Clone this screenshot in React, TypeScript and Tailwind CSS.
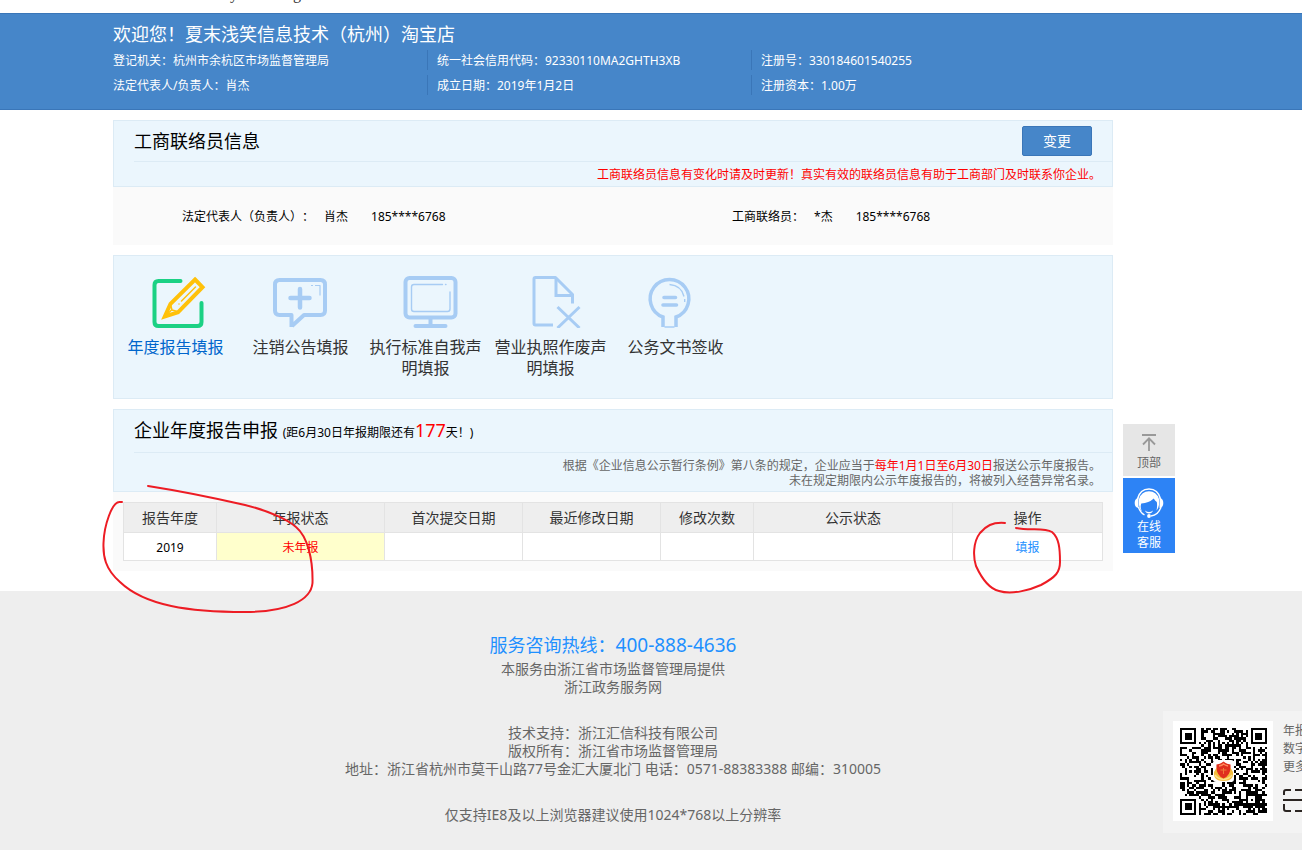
import React from "react";
import { clsx } from "clsx";

const profile = [
  ["登记机关：杭州市余杭区市场监督管理局", "统一社会信用代码：92330110MA2GHTH3XB", "注册号：330184601540255"],
  ["法定代表人/负责人：肖杰", "成立日期：2019年1月2日", "注册资本：1.00万"],
];

const columns = [
  { name: "报告年度", width: "w-[93px]" },
  { name: "年报状态", width: "w-[168px]" },
  { name: "首次提交日期", width: "w-[138px]" },
  { name: "最近修改日期", width: "w-[138px]" },
  { name: "修改次数", width: "w-[93px]" },
  { name: "公示状态", width: "w-[199px]" },
  { name: "操作", width: "" },
];

const ReportIcon = () => (
  <svg viewBox="0 0 112 52" className="h-[52px] w-full" fill="none" strokeLinecap="round" strokeLinejoin="round">
    <path d="M61 5H39q-4 0-4 4v37q0 4 4 4h39q4 0 4-4V27" stroke="#1bd184" strokeWidth="4" />
    <path d="M75.500 3.500 83 11.200 58.500 36.300 45.300 40.500 51 27.800Z" stroke="#ffc10a" strokeWidth="4" strokeLinejoin="miter" />
    <path d="M51 28.500l1.500 5.500 5.500 1.500M46 40l6-6" stroke="#ffc10a" strokeWidth="1.500" />
    <path d="M62 25 76 11M59.500 28v.1" stroke="#ffc10a" strokeWidth="1.500" />
  </svg>
);

const CancelIcon = () => (
  <svg viewBox="0 0 112 52" className="h-[52px] w-full" fill="none" stroke="#a7ccf4" strokeLinejoin="round">
    <path d="M47 51V39H35q-4.500 0-4.500-4.500V8.500Q30.500 4 35 4h41q4.500 0 4.500 4.500v26Q80.500 39 76 39H59.500L47.500 50" strokeWidth="4" />
    <path d="M55.500 13v18.500M46 22h19" strokeWidth="4.500" strokeLinecap="round" />
    <path d="M70.500 9.500h5v10M66.500 9.500h2" strokeWidth="1.200" />
  </svg>
);

const StandardIcon = () => (
  <svg viewBox="0 0 112 52" className="h-[52px] w-full" fill="none" stroke="#a7ccf4" strokeLinecap="round">
    <rect x="36" y="2" width="50" height="39.500" rx="4" strokeWidth="4" />
    <path d="M80.500 16v17q0 2.500-2.500 2.500H44.500Q42 35.500 42 33V11q0-2.500 2.500-2.500H73M76 8.500h.5" strokeWidth="1.400" />
    <path d="M61 42v6M46 50h30" strokeWidth="4" />
  </svg>
);

const LicenseIcon = () => (
  <svg viewBox="0 0 112 52" className="h-[52px] w-full" fill="none" stroke="#a7ccf4" strokeWidth="3">
    <path d="M78 27.500V18.500L61 1.500H41q-1.500 0-1.500 1.500v44.500q0 1.500 1.500 1.500h17.500" strokeLinejoin="round" />
    <path d="M61.500 2v17.500H78" />
    <path d="M63 31 85 52M85 31 63 52" />
  </svg>
);

const DocumentIcon = () => (
  <svg viewBox="0 0 112 52" className="h-[52px] w-full" fill="none" stroke="#a7ccf4">
    <path d="M43.500 51V41A19.300 19.300 0 1 1 56.500 41V51" strokeWidth="3.500" />
    <path d="M45 51h10" strokeWidth="1.500" />
    <path d="M44.500 21.500h11.500M43.500 29h13.500" strokeWidth="3.600" strokeLinecap="round" />
    <path d="M50 8.500q12 1 14.500 12M65.200 23v3" strokeWidth="1.400" />
  </svg>
);

const services = [
  { name: "年度报告填报", icon: <ReportIcon />, active: true },
  { name: "注销公告填报", icon: <CancelIcon /> },
  { name: "执行标准自我声明填报", icon: <StandardIcon /> },
  { name: "营业执照作废声明填报", icon: <LicenseIcon /> },
  { name: "公务文书签收", icon: <DocumentIcon /> },
];

const QR_SIZE = 37;

const inBox = (x: number, y: number, left: number, top: number, size: number) =>
  x >= left && y >= top && x < left + size && y < top + size;

// square rings of the finder and alignment marks
const ring = (x: number, y: number, cx: number, cy: number) => Math.max(Math.abs(x - cx), Math.abs(y - cy));

const qrPath = () => {
  let seed = 20190102;
  let d = "";
  for (let y = 0; y < QR_SIZE; y++) {
    for (let x = 0; x < QR_SIZE; x++) {
      seed = (Math.imul(seed, 1103515245) + 12345) & 0x7fffffff;
      let dark = ((seed >> 16) & 255) < 132;
      if (inBox(x, y, 0, 0, 8)) dark = [0, 1, 3].includes(ring(x, y, 3, 3));
      else if (inBox(x, y, 29, 0, 8)) dark = [0, 1, 3].includes(ring(x, y, 33, 3));
      else if (inBox(x, y, 0, 29, 8)) dark = [0, 1, 3].includes(ring(x, y, 3, 33));
      else if (inBox(x, y, 28, 28, 5)) dark = ring(x, y, 30, 30) !== 1;
      else if (x === 6) dark = y % 2 === 0;
      else if (y === 6) dark = x % 2 === 0;
      if (dark) d += `M${x} ${y}h1v1h-1z`;
    }
  }
  return d;
};

const QrCode = () => (
  <svg viewBox="0 0 100 100" className="size-[100px] shrink-0 bg-white">
    <path d={qrPath()} transform="translate(7 7) scale(2.351)" fill="#000" shapeRendering="crispEdges" />
    <rect x="40" y="39" width="21" height="22" rx="3" fill="#fff" />
    <path d="M41 51q-1 9 9.500 9T60 51l-3-5H44Z" fill="#f5bd3c" />
    <path d="M42 54q3 4 8.500 4.500Q56 58 59 54" stroke="#fbe08a" strokeWidth="1.500" fill="none" />
    <path d="M43.500 43.500q4-.5 7-3 3 2.500 7 3 .8 10.500-7 14-7.800-3.500-7-14Z" fill="#e0301e" />
    <path d="M46 45q3-.5 4.500-2 2 1.500 4.500 2" stroke="#ff8a5c" strokeWidth="1.500" fill="none" />
    <path d="M47.500 49h6M50.500 47v6" stroke="#f07a3a" strokeWidth="1" />
  </svg>
);

// tail end of the site banner, scrolled almost out of view
const Banner = () => (
  <div className="h-[13px] overflow-hidden pr-19">
    <div className="mx-auto -mt-3.5 flex max-w-[1000px] gap-[55px] pl-[117px] font-['Liberation_Serif',serif] text-base leading-4 text-[#333]">
      <span>y</span>
      <span>g</span>
    </div>
  </div>
);

const Header = () => (
  <header className="border-y border-[#3a76b8] bg-[#4686c9] pr-19 text-white">
    <div className="mx-auto max-w-[1000px] pt-2 pb-3.5">
      <h1 className="mb-1 text-lg leading-6">欢迎您！夏末浅笑信息技术（杭州）淘宝店</h1>
      <div className="flex flex-col gap-[5px] text-xs leading-[22px]">
        {profile.map((row) => (
          <div key={row[0]} className="grid h-5 grid-cols-[314px_324px_1fr]">
            {row.map((item, i) => (
              <span key={item} className={clsx("h-5", i > 0 && "border-l border-[#3a76b8] pl-[9px]")}>
                {item}
              </span>
            ))}
          </div>
        ))}
      </div>
    </div>
  </header>
);

const Contact = () => (
  <section>
    <div className="border border-[#dcebf5] bg-[#ebf6fd] pl-5">
      <div className="flex h-[41px] items-center justify-between border-b border-[#dcebf5] pr-5">
        <h2 className="text-lg">工商联络员信息</h2>
        <button className="h-[30px] w-[70px] rounded-xs border border-[#3a76b8] bg-[#4686c9] text-sm text-white">变更</button>
      </div>
      <p className="h-6 pr-[11px] text-right text-xs leading-[26px] text-[#f00]">
        工商联络员信息有变化时请及时更新！真实有效的联络员信息有助于工商部门及时联系你企业。
      </p>
    </div>
    <div className="grid h-[58px] grid-cols-[550px_1fr] items-center bg-[#fafafa] pt-0.5 pl-[69px] text-xs">
      <div className="flex">
        <span className="mr-2.5 [text-spacing-trim:space-all]">法定代表人（负责人）：</span>
        <span className="mr-[23px]">肖杰</span>
        <span>185****6768</span>
      </div>
      <div className="flex">
        <span className="mr-2.5">工商联络员：</span>
        <span className="mr-[23px]">*杰</span>
        <span>185****6768</span>
      </div>
    </div>
  </section>
);

const Services = () => (
  <nav className="flex h-36 border border-[#dcebf5] bg-[#ebf6fd] pt-5">
    {services.map((service) => (
      <a
        key={service.name}
        href="#"
        className={clsx(
          "w-[125px] pr-[7px] pl-[5px] text-center text-base leading-[21px]",
          service.active ? "text-[#0066cc]" : "text-[#333]"
        )}
      >
        {service.icon}
        <span className="mt-[9px] block">{service.name}</span>
      </a>
    ))}
  </nav>
);

const Report = () => (
  <section className="bg-[#fafafa] pb-2.5">
    <div className="border border-[#dcebf5] bg-[#ebf6fd] pl-5">
      <h2 className="h-[43px] border-b border-[#dcebf5] text-lg leading-10">
        企业年度报告申报{" "}
        <span className="text-xs">
          (距6月30日年报期限还有<b className="text-lg leading-none font-normal text-[#f00]">177</b>天！)
        </span>
      </h2>
      <p className="pt-[5px] pr-[11px] pb-[3px] text-right text-xs leading-[15px] text-[#666]">
        根据《企业信息公示暂行条例》第八条的规定，企业应当于<span className="text-[#f00]">每年1月1日至6月30日</span>报送公示年度报告。
        <br />
        未在规定期限内公示年度报告的，将被列入经营异常名录。
      </p>
    </div>
    <div className="px-2.5 pt-2.5">
      <table className="w-full table-fixed border-collapse text-center text-xs">
        <thead>
          <tr className="h-[30px] bg-[#eee] text-sm text-[#333]">
            {columns.map((column) => (
              <th key={column.name} className={clsx("border border-[#e3e3e3] p-0 font-normal", column.width)}>
                {column.name}
              </th>
            ))}
          </tr>
        </thead>
        <tbody>
          <tr className="h-7 bg-white">
            <td className="border border-[#e3e3e3] pt-0.5">2019</td>
            <td className="border border-[#e3e3e3] bg-[#ffffcc] pt-0.5 text-[#f00]">未年报</td>
            <td className="border border-[#e3e3e3]" />
            <td className="border border-[#e3e3e3]" />
            <td className="border border-[#e3e3e3]" />
            <td className="border border-[#e3e3e3]" />
            <td className="border border-[#e3e3e3] pt-0.5">
              <a href="#" className="text-[#1e90ff]">填报</a>
            </td>
          </tr>
        </tbody>
      </table>
    </div>
  </section>
);

const Footer = () => (
  <footer className="relative bg-[#eee] pt-[42px] pr-19 pb-[26px] text-center text-sm leading-[18px] text-[#666]">
    <p className="mb-[3px] text-lg leading-6 text-[#1e90ff]">
      服务咨询热线：<span className="text-[19px]">400-888-4636</span>
    </p>
    <p>本服务由浙江省市场监督管理局提供</p>
    <p>浙江政务服务网</p>
    <p className="mt-7">技术支持：浙江汇信科技有限公司</p>
    <p>版权所有：浙江省市场监督管理局</p>
    <p>地址：浙江省杭州市莫干山路77号金汇大厦北门 电话：0571-88383388 邮编：310005</p>
    <p className="mt-7">仅支持IE8及以上浏览器建议使用1024*768以上分辨率</p>

    {/* app download card, runs off the right edge */}
    <div className="absolute right-0 bottom-[17px] flex w-[139px] gap-2.5 overflow-hidden bg-[#f3f3f3] pt-2.5 pb-3 pl-2.5 text-left text-xs leading-[18px] whitespace-nowrap">
      <QrCode />
      <div className="w-20 shrink-0 pt-px">
        <p>年报</p>
        <p>数字</p>
        <p>更多</p>
        <svg viewBox="0 0 24 24" className="mt-3 size-6" fill="none" stroke="#2b2522" strokeWidth="2">
          <path d="M1 7V4q0-2 2-2h5M12 2h8M0 12h24M1 16v5q0 2 2 2h5M12 23h8" />
        </svg>
      </div>
    </div>
  </footer>
);

const SideTools = () => (
  <aside className="absolute top-[424px] right-[127px] flex w-[52px] flex-col gap-0.5 text-xs leading-4">
    <button className="flex h-[52px] flex-col items-center bg-[#e6e6e6] pt-2.5 text-[#666]">
      <svg viewBox="0 0 14 18" className="mb-[3px] h-[18px] w-3.5" fill="none" stroke="#999" strokeWidth="1.800">
        <path d="M0 1h14M7 17V4.500M1 10.500l6-6.200 6 6.200" />
      </svg>
      顶部
    </button>
    <button className="flex h-[75px] flex-col items-center bg-[#2d83f5] pt-2.5 text-white">
      <svg viewBox="0 0 30 30" className="mb-px size-[30px] shrink-0">
        <path d="M3.500 11Q6 1 15 1t11.500 10" fill="none" stroke="#fff" strokeWidth="1.600" />
        <path d="M5 11Q7.500 3.200 15 3.200T25 11v6q-.5 3-2.500 5.500 1-5 .3-8.500-2-1.500-3-3.500-5 4.500-12.500 5-1.500 4 .8 8Q5.500 21 5 17Z" fill="#fff" />
        <path d="M4.500 10q-3.800.5-3.800 5t3.800 5ZM25.500 10q3.800.5 3.800 5t-3.800 5Z" fill="#fff" />
        <path d="M27 19q-2.500 8-10 9M4.500 19q1.500 5.500 6 8" fill="none" stroke="#fff" strokeWidth="1.400" />
        <path d="M11 22.500q4 3 8 0-1 3-4 3t-4-3Z" fill="#fff" />
        <circle cx="15" cy="28" r="1.900" fill="#fff" />
      </svg>
      <span className="block">在线</span>
      <span className="block">客服</span>
    </button>
  </aside>
);

// hand-drawn marks over the status and action cells
const Marks = () => (
  <svg
    viewBox="0 0 970 140"
    className="pointer-events-none absolute top-[480px] left-[100px] h-[140px] w-[970px]"
    fill="none"
    stroke="#ed1c24"
    strokeWidth="2"
    strokeLinecap="round"
  >
    <path d="M48 6C80 11 110 17 145 25C170 31 188 40 196 47C208 57 213 80 212.500 103C211 120 188 132 145 132C90 132 45 126 20 102C5 89 3 76 3.500 63C4 46 12 21 20 22H22" />
    <path d="M905 43C892 42 886 46 880 53C873 62 873 77 876 86C882 99 890 109 899 111C912 115 930 110 941 105C956 97 960 92 960 82C960 68 959 58 952 52C944 47 930 51 916 48" />
  </svg>
);

export default function App() {
  return (
    <div
      lang="zh-CN"
      className="relative min-h-screen overflow-hidden bg-white font-['Noto_Sans','Noto_Sans_CJK_SC',sans-serif] text-black"
    >
      <Banner />
      <Header />
      <main className="pr-19">
        <div className="mx-auto flex max-w-[1000px] flex-col gap-2.5 pt-2.5 pb-5">
          <Contact />
          <Services />
          <Report />
        </div>
      </main>
      <Footer />
      <SideTools />
      <Marks />
    </div>
  );
}
